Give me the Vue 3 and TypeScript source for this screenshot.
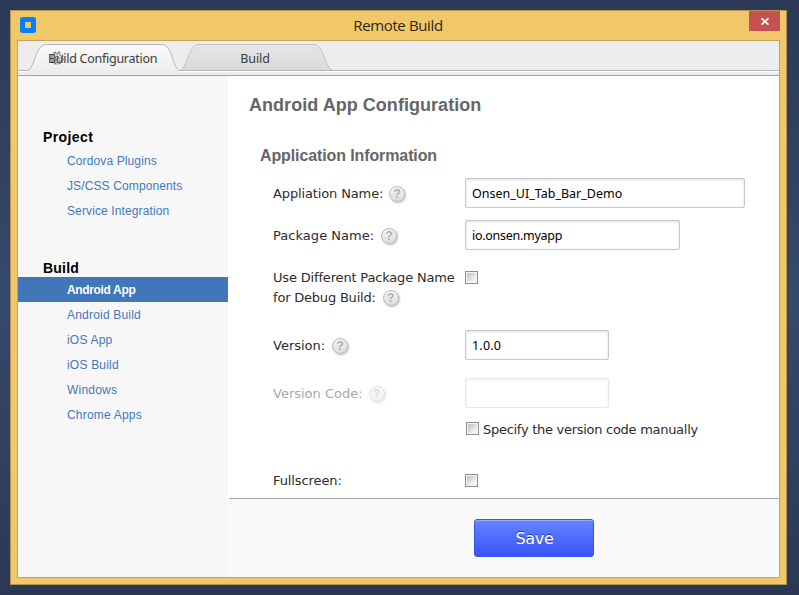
<script setup lang="ts">
import { ref } from 'vue'

interface NavGroup {
  title: string
  items: string[]
}

const groups: NavGroup[] = [
  { title: 'Project', items: ['Cordova Plugins', 'JS/CSS Components', 'Service Integration'] },
  { title: 'Build', items: ['Android App', 'Android Build', 'iOS App', 'iOS Build', 'Windows', 'Chrome Apps'] },
]
const active = ref('Android App')
const appName = ref('Onsen_UI_Tab_Bar_Demo')
const packageName = ref('io.onsen.myapp')
const version = ref('1.0.0')
const versionCode = ref('')
const differentPackage = ref(false)
const manualCode = ref(false)
const fullscreen = ref(false)
</script>

<template>
  <div class="desktop">
    <div class="window">
      <header class="titlebar">
        <svg class="app-icon" width="16" height="16" viewBox="0 0 16 16">
          <rect width="16" height="16" rx="2.5" fill="#057fff" />
          <rect x="5" y="5" width="6" height="6" fill="#efc868" />
        </svg>
        <h1 class="title">Remote Build</h1>
        <button class="close" aria-label="Close">
          <svg width="8" height="7" viewBox="0 0 8 7">
            <path d="M0.5 0.3L7.5 6.7M7.5 0.3L0.5 6.7" stroke="#fff" stroke-width="1.7" />
          </svg>
        </button>
      </header>

      <div class="client">
        <nav class="tabs">
          <svg class="tab-shapes" width="761" height="35" viewBox="0 0 761 35">
            <defs>
              <linearGradient id="on" x1="0" y1="0" x2="0" y2="1">
                <stop offset="0" stop-color="#fafafa" />
                <stop offset="1" stop-color="#ececec" />
              </linearGradient>
              <linearGradient id="off" x1="0" y1="0" x2="0" y2="1">
                <stop offset="0" stop-color="#e6e6e6" />
                <stop offset="1" stop-color="#d9d9d9" />
              </linearGradient>
            </defs>
            <path d="M162 29.5C169 27 171 3.5 180 3.5H296C306 3.5 307 28 315 29.5Z" fill="url(#off)" />
            <path d="M162 29.5C169 27 171 3.5 180 3.5H296C306 3.5 307 28 315 29.5" fill="none" stroke="#c3c3c3" />
            <path d="M0 30.5H10C17 29 17 4.5 28 4.5H144C155 4.5 154 28 163 30.5H761" fill="none" stroke="#fff" />
            <path d="M9 29.5C17 28 17 3.5 28 3.5H144C155 3.5 154 28 162 29.5V32H9Z" fill="url(#on)" />
            <path d="M0 29.5H9C17 28 17 3.5 28 3.5H144C155 3.5 154 28 162 29.5H761" fill="none" stroke="#b4b4b4" />
          </svg>
          <a class="tab first">
            <svg class="gear" width="14" height="14" viewBox="0 0 14 14" fill="none" stroke="#555">
              <circle cx="7" cy="7" r="6" stroke-width="1.4" stroke-dasharray="2.9 1.81" />
              <circle cx="7" cy="7" r="4.6" stroke-width=".8" />
              <circle cx="7" cy="7" r="1.8" />
              <path d="M7 2V5M7 9V12M2 7H5M9 7H12M3.5 3.5L5.5 5.5M8.5 8.5L10.5 10.5M10.5 3.5L8.5 5.5M5.5 8.5L3.5 10.5" stroke-width=".7" />
            </svg>
            <span class="tab-config">Build Configuration</span>
          </a>
          <a class="tab second"><span>Build</span></a>
        </nav>

        <div class="body">
          <aside class="sidebar">
            <section v-for="g in groups" :key="g.title" class="group">
              <h2>{{ g.title }}</h2>
              <a v-for="item in g.items" :key="item" :class="{ selected: item === active }" @click="active = item">{{ item }}</a>
            </section>
          </aside>

          <main class="main">
            <div class="form">
              <h2 class="page-title">Android App Configuration</h2>
              <h3 class="section-title">Application Information</h3>

              <div class="row name">
                <label><span class="l1">Appliation Name:</span><i class="help">?</i></label>
                <input v-model="appName" class="field wide" />
              </div>
              <div class="row package">
                <label><span class="l2">Package Name:</span><i class="help">?</i></label>
                <input v-model="packageName" class="field medium" />
              </div>
              <div class="row debug">
                <label class="stacked">
                  <span class="l3">Use Different Package Name</span>
                  <span class="line2"><span class="l4">for Debug Build:</span><i class="help">?</i></span>
                </label>
                <input v-model="differentPackage" type="checkbox" class="check" />
              </div>
              <div class="row version">
                <label><span class="l5">Version:</span><i class="help">?</i></label>
                <input v-model="version" class="field small" />
              </div>
              <div class="row code disabled">
                <label><span class="l6">Version Code:</span><i class="help">?</i></label>
                <input v-model="versionCode" class="field small" disabled />
              </div>
              <div class="row manual">
                <label></label>
                <input v-model="manualCode" type="checkbox" class="check" />
                <span class="manual-text">Specify the version code manually</span>
              </div>
              <div class="row full">
                <label><span class="l7">Fullscreen:</span></label>
                <input v-model="fullscreen" type="checkbox" class="check" />
              </div>
            </div>
            <footer class="footer">
              <button class="save"><span>Save</span></button>
            </footer>
          </main>
        </div>
      </div>
    </div>
  </div>
</template>

<style>
body {
  margin: 0;
  overflow: hidden;
}
</style>

<style scoped>
* {
  box-sizing: border-box;
}
h1, h2, h3 {
  margin: 0;
}
.desktop {
  width: 799px;
  height: 595px;
  padding: 10px 12px 10px 10px;
  background: linear-gradient(#2b3955, #35496b 50%, #2b3855);
}
.window {
  height: 575px;
  border: 1px solid #b6924c;
  background: #f0c869;
  padding: 0 6px 6px;
  display: flex;
  flex-direction: column;
}
.titlebar {
  height: 29px;
  display: flex;
  padding-left: 3px;
  align-items: flex-start;
}
.app-icon {
  margin-top: 6px;
}
.title {
  flex: 1;
  text-align: center;
  font: 400 15px/29px "Open Sans", sans-serif;
  letter-spacing: -.37px;
  color: #2e2618;
  padding-left: 11px;
}
.close {
  width: 31px;
  height: 20px;
  border: 0;
  padding: 0;
  background: #c75050;
  display: flex;
  align-items: center;
  justify-content: center;
}
.client {
  height: 538px;
  border: 1px solid #c6a35c;
  background: #fff;
}
.tabs {
  height: 35px;
  position: relative;
  display: flex;
  background: #ededed;
  border-bottom: 1px solid #a3a3a3;
  font: 12.5px/36px "Noto Sans", sans-serif;
  letter-spacing: -.27px;
  color: #3c3c3c;
}
.tab-shapes {
  position: absolute;
  left: 0;
  top: 0;
}
.tab {
  position: relative;
  height: 34px;
}
.first {
  width: 162px;
  padding-left: 30px;
}
.second {
  width: 150px;
  text-align: center;
  letter-spacing: -.1px;
}
.gear {
  position: absolute;
  left: 32px;
  top: 10px;
  opacity: .75;
}
.body {
  height: 501px;
  display: flex;
}
.sidebar {
  width: 210px;
  background: #f7f7f7;
  padding-top: 48px;
  font-family: "Liberation Sans", Arial, sans-serif;
}
.group {
  margin-bottom: 28px;
}
.group h2 {
  height: 25px;
  padding-left: 25px;
  font-size: 14px;
  line-height: 27px;
  letter-spacing: .4px;
  color: #000;
}
.group + .group h2 {
  line-height: 33px;
  letter-spacing: .2px;
}
.group a {
  display: block;
  height: 25px;
  padding-left: 49px;
  font-size: 12px;
  line-height: 25px;
  letter-spacing: .12px;
  color: #4478bf;
}
.group + .group a {
  line-height: 27px;
  letter-spacing: .2px;
}
.group + .group a.selected {
  background: #4176b8;
  color: #fff;
  font-weight: 700;
  letter-spacing: -.35px;
}
.main {
  width: 550px;
  margin-left: 1px;
}
.form {
  height: 422px;
  padding: 18px 0 0 20px;
}
.page-title {
  font: 700 18px/22px "Liberation Sans", Arial, sans-serif;
  letter-spacing: .04px;
  color: #666;
}
.section-title {
  padding-left: 11px;
  margin-top: 29px;
  font: 700 16px/22px "Liberation Sans", Arial, sans-serif;
  letter-spacing: -.11px;
  color: #666;
}
.row {
  display: flex;
  padding-left: 24px;
  font: 13px/20px "DejaVu Sans", Verdana, sans-serif;
  color: #2c2c2c;
}
.row label {
  width: 192px;
  flex: none;
  display: flex;
  align-items: center;
  white-space: nowrap;
}
.row label span {
  padding-top: 2px;
}
.row .stacked {
  flex-direction: column;
  align-items: flex-start;
}
.row .stacked span {
  padding-top: 0;
}
.row .stacked .l3 {
  height: 20px;
  line-height: 22px;
}
.row .stacked .line2 {
  display: flex;
  align-items: center;
  height: 20px;
}
.row .stacked .l4 {
  height: 20px;
  line-height: 22px;
}
.l1 { letter-spacing: -.13px; }
.l2 { letter-spacing: .04px; }
.l3 { letter-spacing: -.17px; }
.l4 { letter-spacing: -.2px; }
.l7 { letter-spacing: -.1px; }
.name { height: 30px; margin-top: 11px; }
.package { height: 30px; margin-top: 12px; }
.debug { height: 40px; margin-top: 17px; }
.version { height: 30px; margin-top: 23px; }
.code { height: 30px; margin-top: 18px; }
.manual { height: 20px; margin-top: 11px; }
.full { height: 20px; margin-top: 32px; }
.full label span { padding-top: 0; }
.disabled { opacity: .42; }
.help {
  width: 16px;
  height: 16px;
  margin-left: 7px;
  margin-top: 2px;
  border: 1px solid #b8b8b8;
  border-radius: 50%;
  background: linear-gradient(#f4f4f4, #dedede);
  box-shadow: 1px 1px 2px #bbb;
  font: 700 12px/14px "Liberation Sans", Arial, sans-serif;
  text-align: center;
  color: #b0b0b0;
}
.l1 + .help,
.l6 + .help { margin-left: 6px; }
.field {
  height: 30px;
  padding: 1px 6px 0;
  border: 1px solid #c8c8c8;
  border-radius: 2px;
  background: #fff;
  box-shadow: inset 0 1px 3px #ddd;
  font: 12.5px "Noto Sans", sans-serif;
  color: #000;
}
.wide { width: 280px; }
.medium { width: 215px; letter-spacing: -.28px; }
.small { width: 144px; letter-spacing: .2px; }
.check {
  appearance: none;
  width: 13px;
  height: 13px;
  margin: 3px 0 0;
  border: 1px solid #8e8f8f;
  background: linear-gradient(135deg, #b9bdc9, #f3f3f4 75%) content-box, linear-gradient(#bbb, #ccc) padding-box;
  padding: 1px;
  box-shadow: inset 0 0 0 1px #f4f4f4;
}
.debug .check { margin-top: 4px; }
.manual .check { margin: 3px 0 0 1px; }
.manual-text {
  margin-left: 4px;
  line-height: 22px;
  letter-spacing: -.28px;
}
.footer {
  height: 79px;
  border-top: 1px solid #a3a3a3;
  background: #fafafa;
  padding: 20px 0 0 245px;
}
.save {
  width: 120px;
  height: 38px;
  padding: 1px 0 0 1px;
  border: 1px solid #3657ef;
  border-radius: 3px;
  background: linear-gradient(#6685ff, #3654f8);
  box-shadow: inset 0 1px 0 #91a8ff;
  color: #fff;
  font: 16px/36px "DejaVu Sans", Verdana, sans-serif;
  letter-spacing: -.3px;
  text-shadow: 0 -1px 0 #233ba8;
}
</style>
